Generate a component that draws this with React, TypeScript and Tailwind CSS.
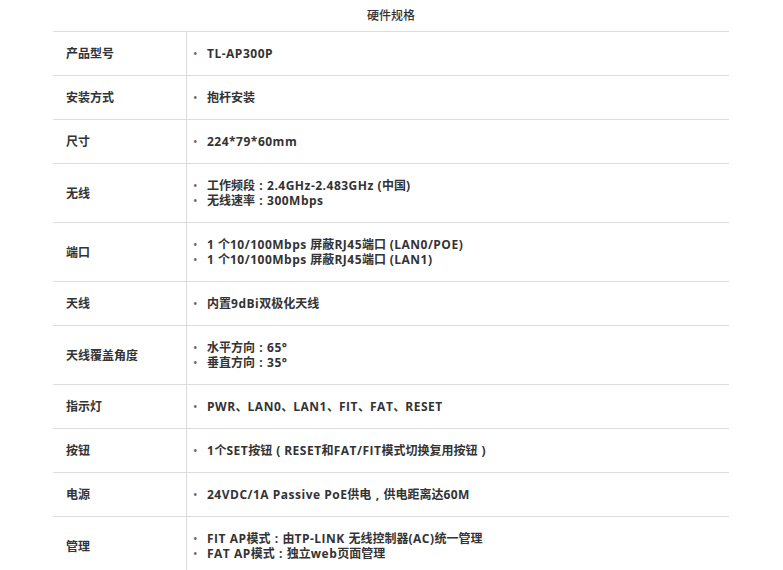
import React from "react";

const rows: { label: string; values: string[] }[] = [
  { label: "产品型号", values: ["TL-AP300P"] },
  { label: "安装方式", values: ["抱杆安装"] },
  { label: "尺寸", values: ["224*79*60mm"] },
  { label: "无线", values: ["工作频段：2.4GHz-2.483GHz (中国)", "无线速率：300Mbps"] },
  { label: "端口", values: ["1 个10/100Mbps 屏蔽RJ45端口 (LAN0/POE)", "1 个10/100Mbps 屏蔽RJ45端口 (LAN1)"] },
  { label: "天线", values: ["内置9dBi双极化天线"] },
  { label: "天线覆盖角度", values: ["水平方向：65°", "垂直方向：35°"] },
  { label: "指示灯", values: ["PWR、LAN0、LAN1、FIT、FAT、RESET"] },
  { label: "按钮", values: ["1个SET按钮（RESET和FAT/FIT模式切换复用按钮）"] },
  { label: "电源", values: ["24VDC/1A Passive PoE供电，供电距离达60M"] },
  { label: "管理", values: ["FIT AP模式：由TP-LINK 无线控制器(AC)统一管理", "FAT AP模式：独立web页面管理"] },
];

function Value({ text }: { text: string }) {
  const parts = text.split(/([：，（）]|[\x20-\x7E°]+)/).filter((p) => p !== "");
  return (
    <span className="whitespace-nowrap">
      {parts.map((p, i) => {
        if (p === "（" || p === "）") {
          return (
            <span key={i} className="inline-block w-[12px] text-center">
              {p === "（" ? "(" : ")"}
            </span>
          );
        }
        if (p === "：" || p === "，") {
          return (
            <span key={i} className="inline-block w-[12px] text-center">
              {p === "：" ? ":" : ","}
            </span>
          );
        }
        if (/^[\x20-\x7E°]+$/.test(p)) {
          return (
            <span key={i} className="tracking-[0.5px]">
              {p}
            </span>
          );
        }
        return <React.Fragment key={i}>{p}</React.Fragment>;
      })}
    </span>
  );
}

export default function App() {
  return (
    <div
      className="w-[783px] h-[570px] overflow-hidden bg-white text-[12px] leading-[15px] text-[#333]"
      style={{ fontFamily: '"Open Sans", "Noto Sans CJK SC", sans-serif' }}
    >
      <div className="ml-[53px] w-[676px]">
        <div className="h-[31px] flex items-center justify-center text-[12px] font-medium">
          硬件规格
        </div>
        {rows.map((r) => (
          <div key={r.label} className="flex border-t border-[#dcdcdc]">
            <div className="w-[134px] flex items-center pl-[13px] py-[14px] font-semibold border-r border-[#dcdcdc]">
              <span className="h-[15px] leading-[15px]">{r.label}</span>
            </div>
            <div className="flex-1 flex flex-col justify-center py-[14px] pl-[6px] font-bold">
              {r.values.map((v) => (
                <div key={v} className="flex h-[15px] items-center overflow-visible">
                  <span className="w-[14px] text-[#666] font-normal">•</span>
                  <Value text={v} />
                </div>
              ))}
            </div>
          </div>
        ))}
      </div>
    </div>
  );
}
